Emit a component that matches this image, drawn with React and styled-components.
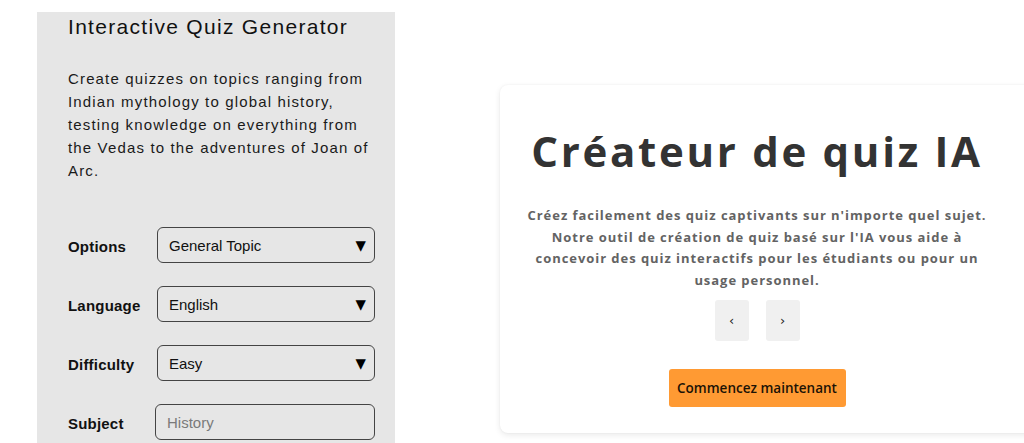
import React from 'react';
import styled, { createGlobalStyle } from 'styled-components';

const panelGrey = '#e6e6e6';
const orange = '#ff9a33';

const GlobalStyle = createGlobalStyle`
  html, body {
    margin: 0;
    padding: 0;
    background: #ffffff;
    overflow: hidden;
  }

  * {
    box-sizing: border-box;
  }
`;

const Page = styled.div`
  display: flex;
  align-items: flex-start;
  width: 1024px;
  height: 443px;
  overflow: hidden;
`;

const Sidebar = styled.aside`
  flex: 0 0 auto;
  width: 358px;
  margin: 12px 0 0 37px;
  height: 460px;
  padding: 3px 19px 0 31px;
  background: ${panelGrey};
  font-family: 'Liberation Sans', Arial, sans-serif;
  color: #111;
`;

const SideTitle = styled.h1`
  margin: 0;
  font-size: 21px;
  font-weight: 400;
  line-height: 24px;
  letter-spacing: 1.3px;
`;

const SideText = styled.p`
  margin: 28px 0 0;
  font-size: 15px;
  line-height: 23px;
  letter-spacing: 1.15px;
  color: #1a1a1a;
`;

const Form = styled.div`
  display: flex;
  flex-direction: column;
  gap: 23px;
  margin-top: 45px;
`;

const Row = styled.label`
  display: flex;
  align-items: center;
`;

const Label = styled.span`
  flex: 0 0 89px;
  font-size: 15px;
  font-weight: 700;
  letter-spacing: 0.2px;
  padding-top: 3px;
`;

const SelectWrap = styled.div`
  position: relative;
  width: 218px;
`;

const Select = styled.select`
  appearance: none;
  width: 100%;
  height: 36px;
  padding: 0 30px 0 11px;
  border: 1px solid #444;
  border-radius: 6px;
  background: ${panelGrey};
  font-family: inherit;
  font-size: 15px;
  color: #111;
`;

const Caret = styled.span`
  position: absolute;
  right: 9px;
  top: 50%;
  transform: translateY(-52%);
  font-family: 'DejaVu Sans', sans-serif;
  font-size: 13.5px;
  color: #000;
  pointer-events: none;
`;

const TextInput = styled.input`
  width: 220px;
  min-width: 0;
  height: 36px;
  margin-left: -2px;
  padding: 0 11px;
  border: 1px solid #444;
  border-radius: 6px;
  background: ${panelGrey};
  font-family: inherit;
  font-size: 15px;

  &::placeholder {
    color: #7a7a7a;
  }
`;

const Card = styled.section`
  flex: 0 0 auto;
  width: 560px;
  margin: 85px 0 0 105px;
  height: 348px;
  padding: 0 46px 0 0;
  background: #fff;
  border-radius: 8px;
  box-shadow: 0 2px 6px rgba(0, 0, 0, 0.09), 0 0 2px rgba(0, 0, 0, 0.05);
  font-family: 'Open Sans', 'Noto Sans', sans-serif;
  display: flex;
  flex-direction: column;
  align-items: center;
  text-align: center;
`;

const Hero = styled.h2`
  margin: 38px 0 0;
  font-size: 42px;
  font-weight: 700;
  line-height: 56px;
  letter-spacing: 2.7px;
  color: #333;
`;

const Lead = styled.p`
  margin: 26px 0 0;
  width: 480px;
  font-size: 13px;
  font-weight: 700;
  line-height: 21.7px;
  letter-spacing: 0.95px;
  color: #636363;
`;

const Pager = styled.div`
  display: flex;
  gap: 17px;
  margin-top: 8px;
`;

const PageButton = styled.button`
  width: 34px;
  height: 41px;
  border: none;
  border-radius: 3px;
  background: #f0f0f0;
  font-family: 'DejaVu Sans', sans-serif;
  font-size: 13px;
  color: #222;
  padding: 0;
`;

const Cta = styled.button`
  margin-top: 28px;
  width: 177px;
  height: 38px;
  border: none;
  border-radius: 3px;
  background: ${orange};
  font-family: 'Open Sans', sans-serif;
  font-size: 13.5px;
  font-weight: 600;
  color: #1c1306;
  padding: 0;
`;

const selects = [
  { label: 'Options', options: ['General Topic', 'Specific Topic'] },
  { label: 'Language', options: ['English', 'Français', 'हिन्दी'] },
  { label: 'Difficulty', options: ['Easy', 'Medium', 'Hard'] },
];

export default function App() {
  return (
    <Page>
      <GlobalStyle />

      <Sidebar>
        <SideTitle>Interactive Quiz Generator</SideTitle>
        <SideText>
          Create quizzes on topics ranging from Indian mythology to global history,
          testing knowledge on everything from the Vedas to the adventures of Joan of Arc.
        </SideText>

        <Form>
          {selects.map((s) => (
            <Row key={s.label}>
              <Label>{s.label}</Label>
              <SelectWrap>
                <Select defaultValue={s.options[0]}>
                  {s.options.map((o) => (
                    <option key={o}>{o}</option>
                  ))}
                </Select>
                <Caret>▼</Caret>
              </SelectWrap>
            </Row>
          ))}
          <Row>
            <Label>Subject</Label>
            <TextInput placeholder="History" />
          </Row>
        </Form>
      </Sidebar>

      <Card>
        <Hero>Créateur de quiz IA</Hero>
        <Lead>
          Créez facilement des quiz captivants sur n'importe quel sujet. Notre outil de
          création de quiz basé sur l'IA vous aide à concevoir des quiz interactifs pour
          les étudiants ou pour un usage personnel.
        </Lead>
        <Pager>
          <PageButton>‹</PageButton>
          <PageButton>›</PageButton>
        </Pager>
        <Cta>Commencez maintenant</Cta>
      </Card>
    </Page>
  );
}
